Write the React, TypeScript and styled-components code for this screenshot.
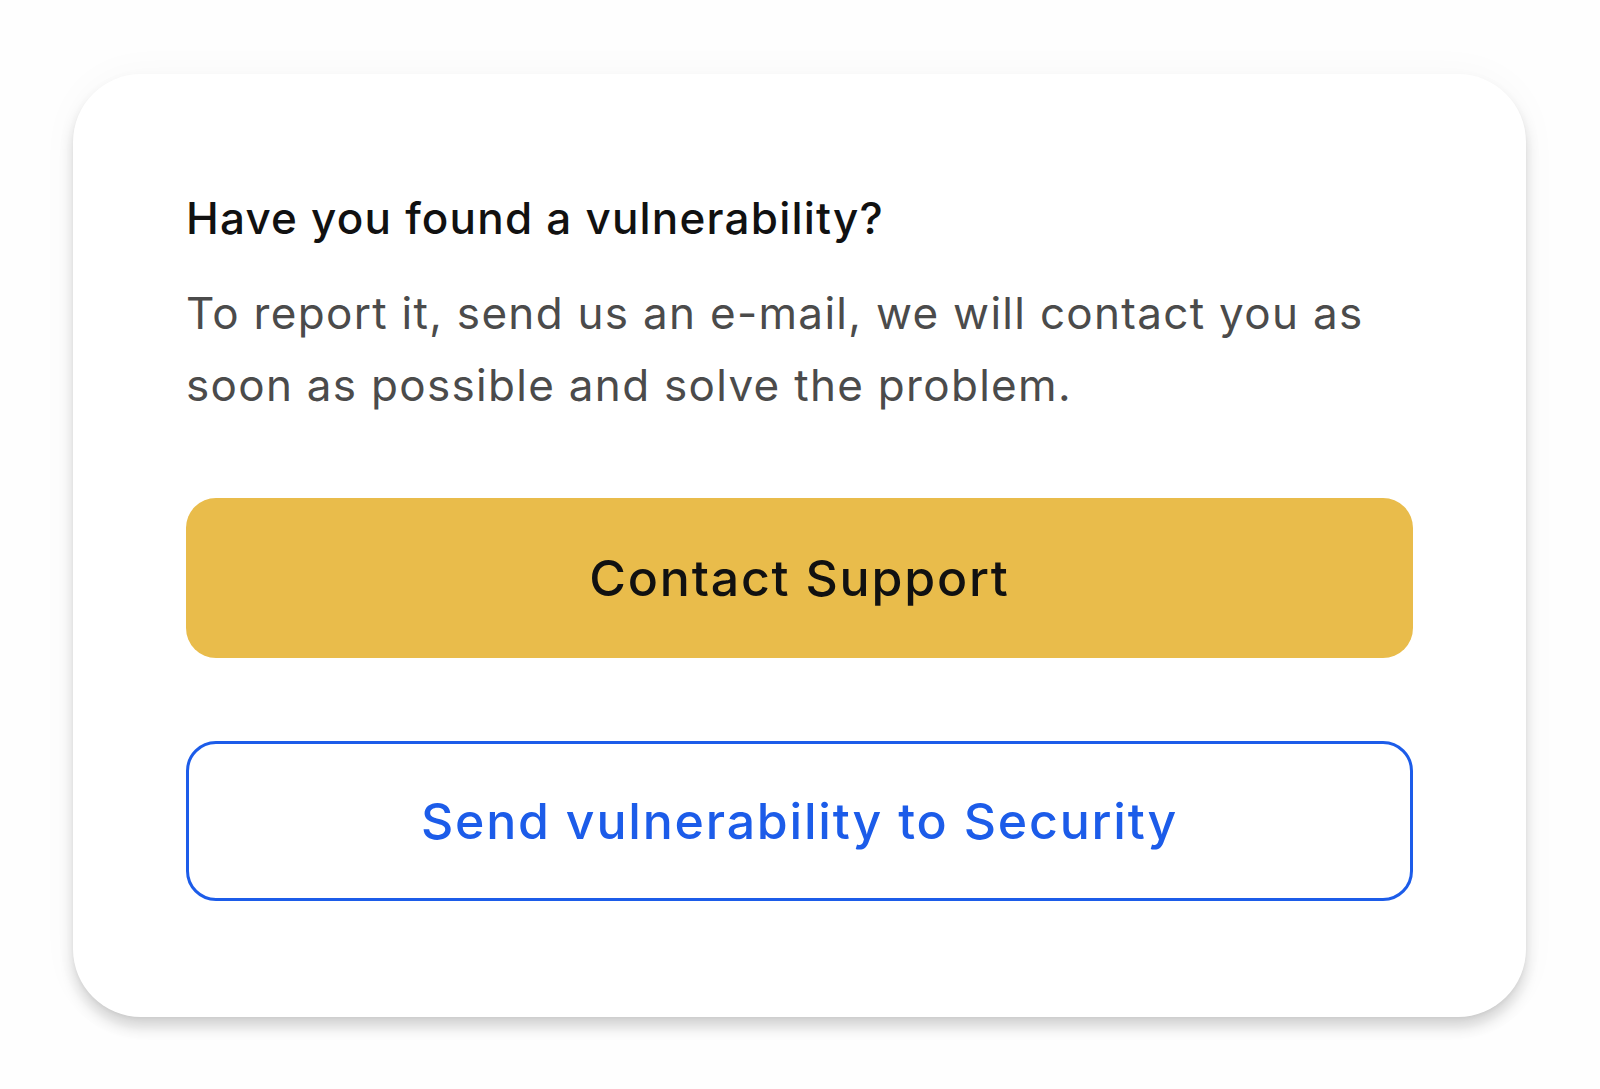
import React from 'react';
import styled, { createGlobalStyle } from 'styled-components';

const GlobalStyle = createGlobalStyle`
  html, body {
    margin: 0;
    padding: 0;
    background: #fefefe;
    font-family: Inter, "Noto Sans", "Liberation Sans", sans-serif;
  }
`;

const Page = styled.main`
  padding: 74px 74px 74px 73px;
`;

const Card = styled.section`
  box-sizing: border-box;
  width: 1453px;
  min-height: 943px;
  padding: 118px 113px 115px 113px;
  background: #ffffff;
  border-radius: 68px;
  box-shadow:
    0 10px 14px rgba(0, 0, 0, 0.16),
    0 2px 3px rgba(0, 0, 0, 0.04),
    0 0 40px rgba(0, 0, 0, 0.03);
  display: flex;
  flex-direction: column;
`;

const Title = styled.h2`
  margin: 0 0 32px;
  font-size: 44px;
  line-height: 53px;
  font-weight: 500;
  letter-spacing: 1.2px;
  color: #111111;
`;

const Text = styled.p`
  margin: 0 0 77px;
  font-size: 44px;
  line-height: 72px;
  font-weight: 400;
  letter-spacing: 1.3px;
  color: #4b4b4b;
`;

const Actions = styled.div`
  display: flex;
  flex-direction: column;
  gap: 83px;
`;

type ButtonProps = { $variant: 'primary' | 'outline' };

const Button = styled.button<ButtonProps>`
  box-sizing: border-box;
  width: 100%;
  height: 160px;
  border-radius: 30px;
  font-family: inherit;
  font-size: 50px;
  font-weight: 500;
  letter-spacing: 1.8px;
  cursor: pointer;
  border: ${({ $variant }) => ($variant === 'primary' ? 'none' : '3px solid #1c5ce9')};
  background: ${({ $variant }) => ($variant === 'primary' ? '#e9bc4b' : '#ffffff')};
  color: ${({ $variant }) => ($variant === 'primary' ? '#111111' : '#1c5ce9')};
`;

export default function App() {
  return (
    <>
      <GlobalStyle />
      <Page>
        <Card>
          <Title>Have you found a vulnerability?</Title>
          <Text>
            To report it, send us an e-mail, we will contact you as soon as possible and solve the problem.
          </Text>
          <Actions>
            <Button $variant="primary">Contact Support</Button>
            <Button $variant="outline">Send vulnerability to Security</Button>
          </Actions>
        </Card>
      </Page>
    </>
  );
}
